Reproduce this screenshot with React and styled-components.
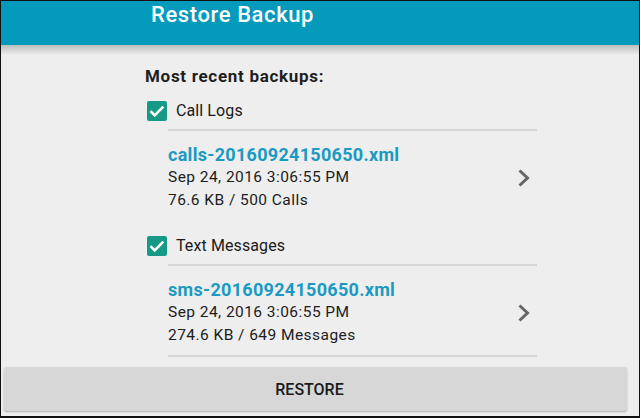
import React from 'react';
import styled, { createGlobalStyle } from 'styled-components';

const GlobalStyle = createGlobalStyle`
  html, body {
    margin: 0;
    padding: 0;
    background: #111111;
  }
  body {
    font-family: Roboto, "Liberation Sans", Arial, sans-serif;
  }
`;

const Frame = styled.div`
  box-sizing: border-box;
  width: 640px;
  height: 418px;
  border: 1px solid #111111;
  border-bottom-width: 2px;
  background: #eeeeee;
  display: flex;
  flex-direction: column;
  overflow: hidden;
`;

const Header = styled.header`
  position: relative;
  height: 44px;
  background: #039abc;
  padding-left: 150px;
  flex-shrink: 0;

  &::after {
    content: '';
    position: absolute;
    left: 0;
    right: 0;
    top: 44px;
    height: 10px;
    background: linear-gradient(#bdbdbd, rgba(238, 238, 238, 0));
  }
`;

const Title = styled.h1`
  margin: 0;
  font-size: 22px;
  line-height: 28px;
  letter-spacing: 0.6px;
  font-weight: 500;
  color: #ffffff;
`;

const Content = styled.main`
  flex: 1;
  width: 392px;
  margin-left: 144px;
  padding-top: 22px;
`;

const Heading = styled.h2`
  margin: 0;
  font-size: 17px;
  line-height: 18px;
  letter-spacing: 0.7px;
  font-weight: 700;
  color: #1e1e1e;
`;

const CheckRow = styled.label`
  display: flex;
  align-items: center;
  gap: 9px;
  padding: 16px 0 8px 2px;
  font-size: 16px;
  line-height: 20px;
  letter-spacing: 0.1px;
  color: #1a1a1a;
`;

const Box = styled.span`
  width: 20px;
  height: 20px;
  border-radius: 2px;
  background: #179a85;
  display: flex;
  align-items: center;
  justify-content: center;
`;

const Item = styled.div`
  display: flex;
  align-items: center;
  margin-left: 23px;
  border-top: 2px solid #d6d6d6;
  border-bottom: ${({ last }) => (last ? '2px solid #d6d6d6' : 'none')};
  padding: 12px 6px 8px 0;
`;

const Info = styled.div`
  flex: 1;
`;

const FileName = styled.div`
  font-size: 18px;
  line-height: 23px;
  letter-spacing: 0.3px;
  font-weight: 700;
  color: #1a9ac2;
`;

const Detail = styled.div`
  font-size: 15.5px;
  line-height: 23px;
  letter-spacing: 0.45px;
  color: #1c1c1c;
`;

const Footer = styled.div`
  padding: 0 12px 5px 3px;
`;

const RestoreButton = styled.button`
  width: 100%;
  height: 44px;
  border: none;
  border-radius: 3px;
  background: #d6d7d6;
  box-shadow: 0 1px 2px rgba(0, 0, 0, 0.28);
  font-family: Roboto, "Liberation Sans", Arial, sans-serif;
  font-size: 16px;
  font-weight: 500;
  color: #1a1a1a;
  padding-right: 18px;
`;

const Check = () => (
  <svg width="20" height="20" viewBox="0 0 20 20">
    <path d="M3.5 10.2l4.2 4.2 8.6-8.8" fill="none" stroke="#ffffff" strokeWidth="2.6" />
  </svg>
);

const Chevron = () => (
  <svg width="14" height="20" viewBox="0 0 14 20">
    <path d="M2.5 2.5l8 7.5-8 7.5" fill="none" stroke="#666666" strokeWidth="3" />
  </svg>
);

const backups = [
  {
    label: 'Call Logs',
    file: 'calls-20160924150650.xml',
    date: 'Sep 24, 2016 3:06:55 PM',
    size: '76.6 KB / 500 Calls',
  },
  {
    label: 'Text Messages',
    file: 'sms-20160924150650.xml',
    date: 'Sep 24, 2016 3:06:55 PM',
    size: '274.6 KB / 649 Messages',
  },
];

export default function App() {
  return (
    <>
      <GlobalStyle />
      <Frame>
        <Header>
          <Title>Restore Backup</Title>
        </Header>
        <Content>
          <Heading>Most recent backups:</Heading>
          {backups.map((b, i) => (
            <React.Fragment key={b.file}>
              <CheckRow>
                <Box>
                  <Check />
                </Box>
                {b.label}
              </CheckRow>
              <Item last={i === backups.length - 1}>
                <Info>
                  <FileName>{b.file}</FileName>
                  <Detail>{b.date}</Detail>
                  <Detail>{b.size}</Detail>
                </Info>
                <Chevron />
              </Item>
            </React.Fragment>
          ))}
        </Content>
        <Footer>
          <RestoreButton>RESTORE</RestoreButton>
        </Footer>
      </Frame>
    </>
  );
}
